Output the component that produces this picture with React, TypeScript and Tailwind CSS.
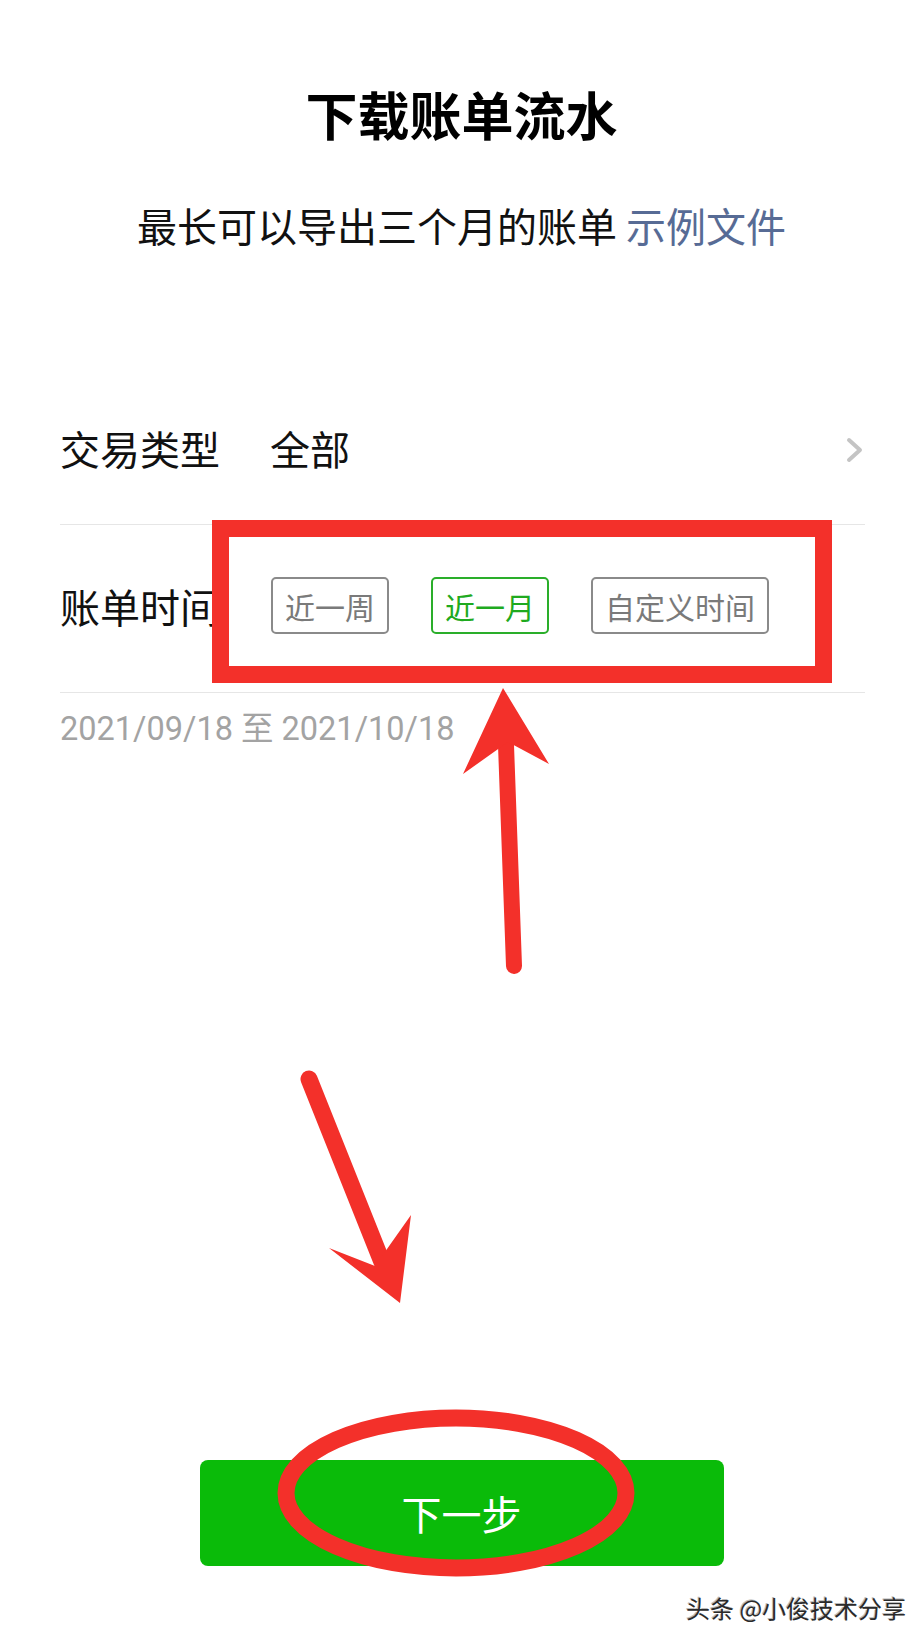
export default function App() {
  return (
    <div className="relative flex h-[1650px] w-[923px] flex-col overflow-hidden bg-white font-['Noto_Sans_CJK_SC',sans-serif] text-[#111]">
      <h1 className="pt-[84px] text-center text-[52px] font-bold leading-[60px] text-black">下载账单流水</h1>
      <p className="mt-[57px] text-center text-[40px] leading-[48px]">
        最长可以导出三个月的账单 <span className="text-[#576b95]">示例文件</span>
      </p>

      <div className="mt-[122px] pl-[60px] pr-[58px]">
        <div className="flex h-[154px] items-center border-b border-[#e6e6e6]">
          <span className="text-[40px] leading-none">交易类型</span>
          <span className="ml-[50px] text-[40px] leading-none">全部</span>
          <svg viewBox="0 0 18 26" className="ml-auto mr-[1px] mt-[4px] h-[26px] w-[18px]" fill="none" stroke="#c4c4c4" strokeWidth="4" strokeLinecap="round" strokeLinejoin="round">
            <path d="M3 3l11 10L3 23" />
          </svg>
        </div>
        <div className="flex h-[168px] items-center border-b border-[#e6e6e6] pb-[6px]">
          <span className="text-[40px] leading-none">账单时间</span>
          <div className="ml-[51px] flex gap-[42px]">
            <span className="flex h-[57px] items-center rounded-[5px] border-2 border-[#8a8a8a] px-[12px] text-[30px] leading-none text-[#7a7a7a]">近一周</span>
            <span className="flex h-[57px] items-center rounded-[5px] border-2 border-[#2aae2a] px-[12px] text-[30px] leading-none text-[#1faa1f]">近一月</span>
            <span className="flex h-[57px] items-center rounded-[5px] border-2 border-[#8a8a8a] px-[12px] text-[30px] leading-none text-[#7a7a7a]">自定义时间</span>
          </div>
        </div>
        <p className="mt-[16px] font-['Roboto','Noto_Sans_CJK_SC',sans-serif] text-[32.5px] leading-[40px] text-[#a3a3a3]">2021/09/18 至 2021/10/18</p>
      </div>

      <button className="mx-auto mt-auto mb-[84px] flex h-[106px] w-[524px] items-center justify-center rounded-[8px] bg-[#0abb09] text-[40px] leading-none text-white">
        下一步
      </button>

      {/* annotation layer drawn over the screenshot */}
      <div className="absolute left-[212px] top-[520px] h-[163px] w-[620px] border-[17px] border-[#f3302a]" />
      <svg viewBox="0 0 923 1650" className="pointer-events-none absolute inset-0 h-[1650px] w-[923px]">
        <line x1="514" y1="966" x2="506" y2="745" stroke="#f3302a" strokeWidth="16" strokeLinecap="round" />
        <path d="M503 688 L549 764 L508 742 L463 774 Z" fill="#f3302a" />
        <line x1="309" y1="1079" x2="382" y2="1262" stroke="#f3302a" strokeWidth="17" strokeLinecap="round" />
        <path d="M400 1303 L329 1248 L375 1266 L411 1215 Z" fill="#f3302a" />
        <ellipse cx="456" cy="1493" rx="170" ry="75" fill="none" stroke="#f3302a" strokeWidth="17" />
      </svg>

      <span className="absolute left-[686px] top-[1596px] text-[24px] leading-none text-[#2a2a2a] [text-shadow:1px_1px_0_#fff,-1px_-1px_0_#bbb]">头条 @小俊技术分享</span>
    </div>
  );
}
